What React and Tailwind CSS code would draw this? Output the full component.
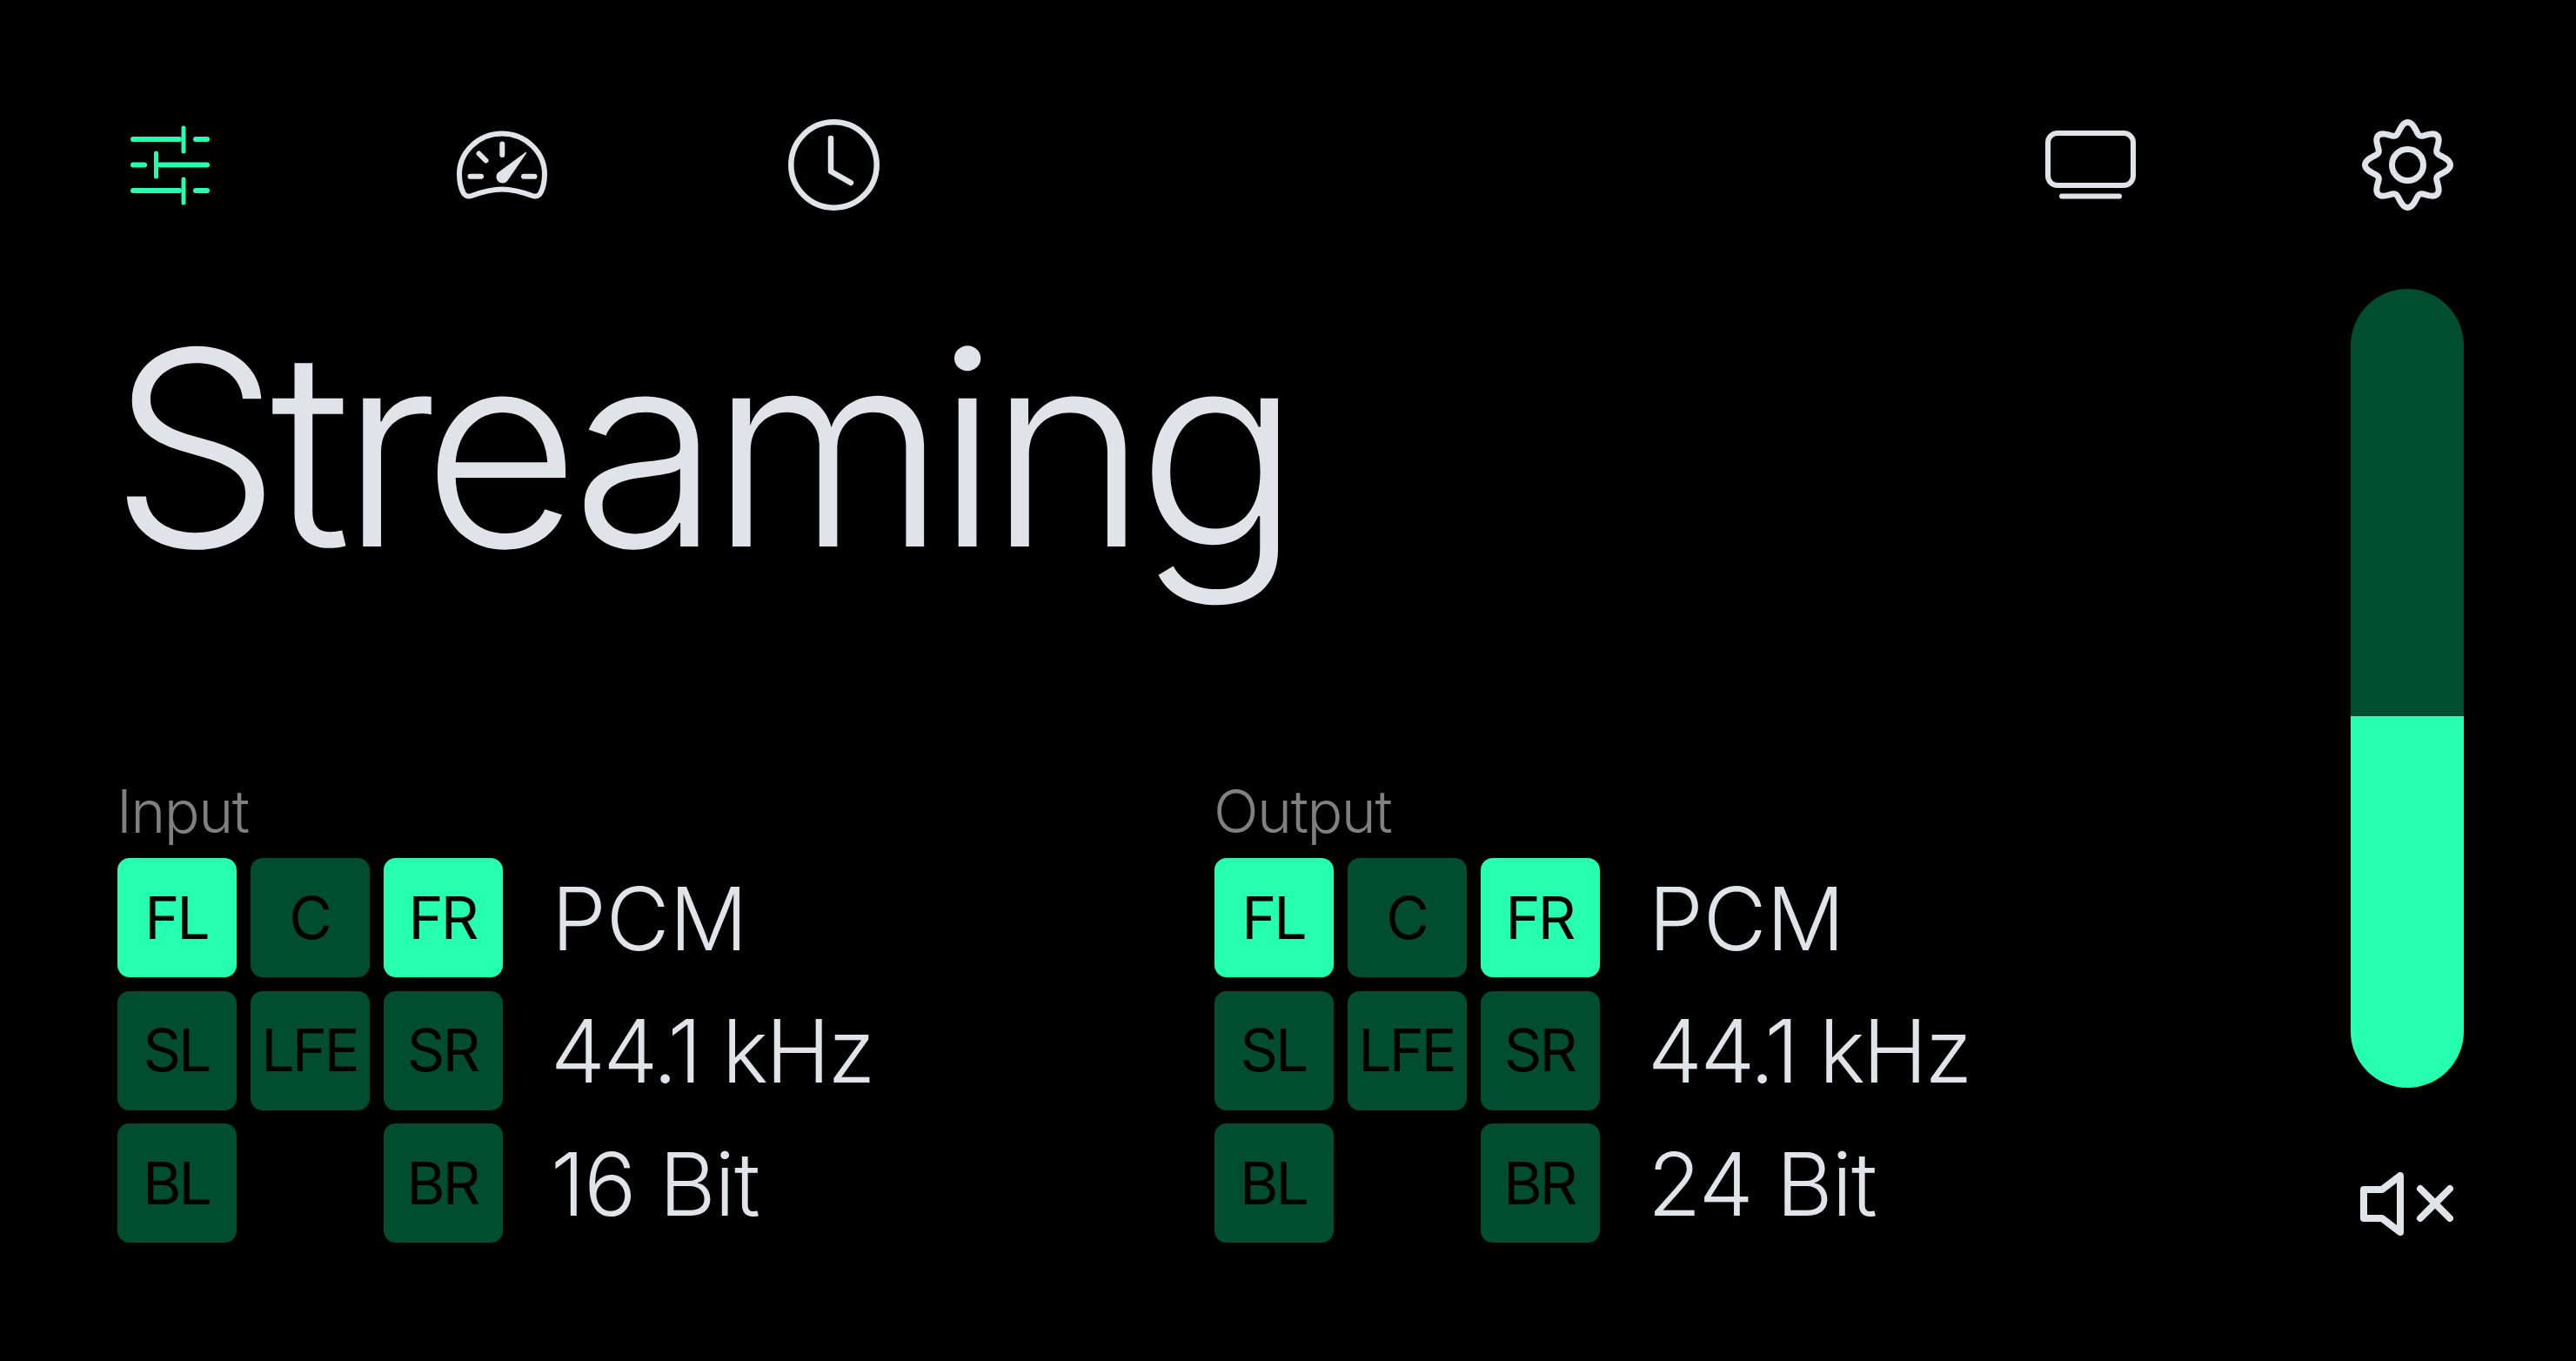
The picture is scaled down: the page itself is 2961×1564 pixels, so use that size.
// gear outline: eight soft lobes round the centre, the diagonal ones a little shorter
const gearPath = () => {
  const pts = [];
  for (let i = 0; i < 240; i++) {
    const t = (i / 240) * Math.PI * 2;
    const r = 43 + 6 * Math.cos(8 * t) - 0.6 * (1 - Math.cos(4 * t));
    pts.push(`${(52.5 + r * Math.sin(t)).toFixed(2)} ${(52.5 - r * Math.cos(t)).toFixed(2)}`);
  }
  return `M${pts.join("L")}Z`;
};

const SlidersIcon = () => (
  <svg width="92" height="92" viewBox="0 0 92 92" fill="none" stroke="#26ffb0" strokeWidth="6" strokeLinecap="round">
    <path d="M3 16H56M75 16H88M3 45.5H16M34 45.5H88M3 75H56M75 75H88" />
    <path d="M61 3V30M29.5 32V59M61 62V89" strokeWidth="5" />
  </svg>
);

const GaugeIcon = () => (
  <svg width="104" height="79" viewBox="0 0 104 79" fill="none" stroke="#e0e4e9" strokeWidth="6" strokeLinecap="round">
    <path d="M52 3.5C25 3.5 3 25 3 50C3 58 4.5 65 7 70.5C8.5 74.5 12.5 76.5 17 75C28 71 39 67.5 52 67.5C65 67.5 76 71 87 75C91.5 76.5 95.5 74.5 97 70.5C99.5 65 101 58 101 50C101 25 79 3.5 52 3.5Z" />
    <path d="M52.3 15.5V28M25.5 26.5L33.5 34.5M15.5 52.7H28M77 52.7H89.5" />
    <path d="M79.5 25.5L57.4 57.8A6.5 6.5 0 0 1 48 48.8Z" fill="#e0e4e9" stroke="#e0e4e9" strokeWidth="1.5" strokeLinejoin="round" />
  </svg>
);

const ClockIcon = () => (
  <svg width="105" height="105" viewBox="0 0 105 105" fill="none" stroke="#e0e4e9" strokeWidth="6.5" strokeLinecap="round" strokeLinejoin="round">
    <circle cx="52.5" cy="52.5" r="49.2" />
    <path d="M49 22V60L72 73" />
  </svg>
);

const TvIcon = () => (
  <svg width="104" height="80" viewBox="0 0 104 80" fill="none" stroke="#e0e4e9" strokeWidth="6" strokeLinecap="round">
    <rect x="3" y="3" width="98" height="60" rx="11" />
    <path d="M19 75.5H85" />
  </svg>
);

const GearIcon = () => (
  <svg width="105" height="105" viewBox="0 0 105 105" fill="none" stroke="#e0e4e9" strokeWidth="7">
    <path d={gearPath()} />
    <circle cx="52.5" cy="52.5" r="18" />
  </svg>
);

const MuteIcon = () => (
  <svg width="107" height="73" viewBox="0 0 107 73" fill="none" stroke="#e0e4e9" strokeWidth="8" strokeLinecap="round" strokeLinejoin="round">
    <path d="M4 20H25L46 4V69L25 53H4Z" />
    <path d="M69 19L103 53M103 19L69 53" />
  </svg>
);

const Tile = ({ label, on }) => (
  <div className={`flex items-center justify-center rounded-[14px] pb-[2px] pr-[2px] text-[68px] font-normal tracking-[-3px] text-black ${on ? "bg-[#26ffb0]" : "bg-[#004d31]"}`}>
    {label}
  </div>
);

const Channel = ({ title, bits, className }) => (
  <div className={className}>
    <div className="ml-[-1px] h-[76px] text-[68px] leading-[76px] font-light tracking-[-1.5px] text-[#808080]">{title}</div>
    <div className="mt-[16px] grid grid-cols-[137px_137px_137px_auto] grid-rows-[137px_137px_137px] gap-x-[16px] gap-y-[15.5px]">
      <Tile label="FL" on />
      <Tile label="C" />
      <Tile label="FR" on />
      <div className="ml-[40px] flex items-center pt-[2px] text-[100px] font-[350] text-[#e0e4e9]">PCM</div>
      <Tile label="SL" />
      <Tile label="LFE" />
      <Tile label="SR" />
      <div className="ml-[39px] flex items-center pt-[2px] text-[100px] font-[350] tracking-[-2.5px] text-[#e0e4e9]">44.1 kHz</div>
      <Tile label="BL" />
      <div />
      <Tile label="BR" />
      <div className="ml-[39px] flex items-center pt-[2px] text-[100px] font-[350] tracking-[-1px] text-[#e0e4e9]">{bits}</div>
    </div>
  </div>
);

export default function App() {
  return (
    <div className="h-screen w-screen overflow-hidden bg-black pt-[137px] pl-[135px] pr-[129px] font-['Inter',sans-serif]">
      {/* top icons */}
      <div className="flex h-[105px] items-center justify-between pl-[8px]">
        <div className="flex items-center">
          <div className="flex w-[105px] justify-center"><SlidersIcon /></div>
          <div className="ml-[276px] flex w-[105px] justify-center"><GaugeIcon /></div>
          <div className="ml-[277px] flex w-[105px] justify-center"><ClockIcon /></div>
        </div>
        <div className="flex items-center">
          <TvIcon />
          <div className="ml-[260px] mr-[12px] flex w-[105px] justify-center"><GearIcon /></div>
        </div>
      </div>

      <div className="mt-[90px] flex justify-between">
        {/* left */}
        <div>
          <h1 className="ml-[-9px] h-[562px] text-[312px] leading-[366px] font-light tracking-[-12.5px] text-[#e0e4e9]">Streaming</h1>
          <div className="flex">
            <Channel title="Input" bits="16 Bit" className="w-[1261px]" />
            <Channel title="Output" bits="24 Bit" />
          </div>
        </div>

        {/* volume */}
        <div className="flex w-[130px] flex-col items-center">
          <div className="flex h-[918px] w-[130px] flex-col overflow-hidden rounded-full bg-[#004d31]">
            <div className="h-[491px]" />
            <div className="flex-1 bg-[#26ffb0]" />
          </div>
          <div className="mt-[97px] ml-[-1px]"><MuteIcon /></div>
        </div>
      </div>
    </div>
  );
}
